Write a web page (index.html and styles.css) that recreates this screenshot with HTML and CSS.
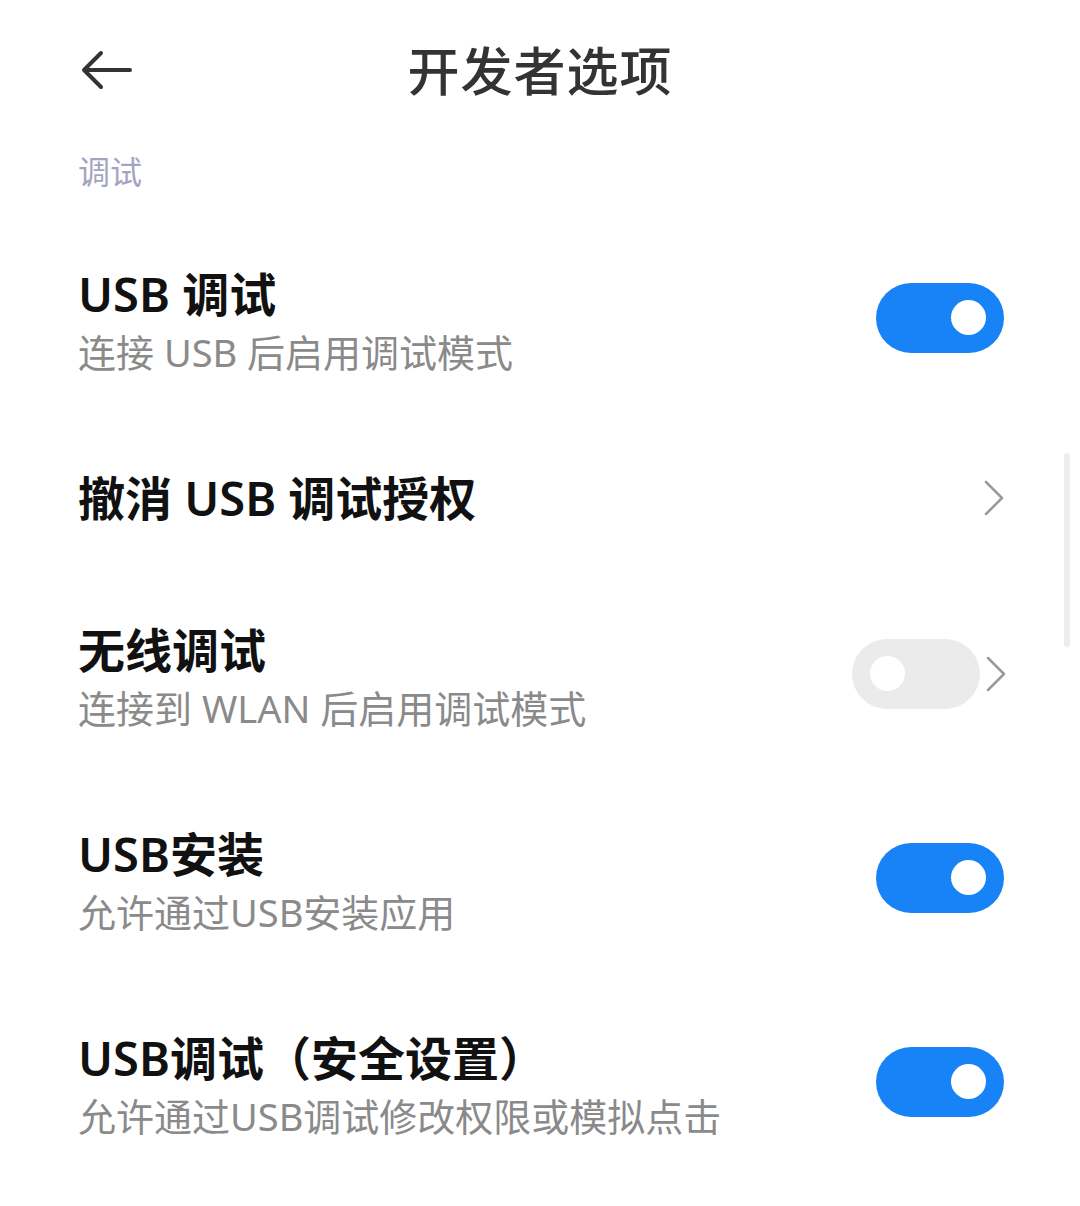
FILE: index.html
```html
<html>
	<head>
		<meta charset="utf-8">
		<title>开发者选项</title>
		<link rel="stylesheet" href="styles.css">
	</head>
	<body>
		<!-- header -->
		<div class="header">
			<div class="back">
				<svg width="52" height="40" viewBox="0 0 52 40">
					<path d="M50 20 H5 M21 3 L4 20 L21 37" fill="none" stroke="#333" stroke-width="4" stroke-linecap="round" stroke-linejoin="round"/>
				</svg>
			</div>
			<div class="title">开发者选项</div>
		</div>

		<div class="section_label">调试</div>

		<div class="list">
			<div class="row">
				<div class="text">
					<div class="item_title">USB 调试</div>
					<div class="item_sub">连接 USB 后启用调试模式</div>
				</div>
				<div class="toggle on"><span class="knob"></span></div>
			</div>

			<div class="row single">
				<div class="text">
					<div class="item_title">撤消 USB 调试授权</div>
				</div>
				<svg class="chevron" width="20" height="36" viewBox="0 0 20 36">
					<path d="M2 2 L18 18 L2 34" fill="none" stroke="#9a9a9a" stroke-width="2.5" stroke-linecap="round" stroke-linejoin="round"/>
				</svg>
			</div>

			<div class="row">
				<div class="text">
					<div class="item_title">无线调试</div>
					<div class="item_sub">连接到 WLAN 后启用调试模式</div>
				</div>
				<div class="controls">
					<div class="toggle off"><span class="knob"></span></div>
					<svg class="chevron" width="20" height="36" viewBox="0 0 20 36">
						<path d="M2 2 L18 18 L2 34" fill="none" stroke="#9a9a9a" stroke-width="2.5" stroke-linecap="round" stroke-linejoin="round"/>
					</svg>
				</div>
			</div>

			<div class="row">
				<div class="text">
					<div class="item_title">USB安装</div>
					<div class="item_sub">允许通过USB安装应用</div>
				</div>
				<div class="toggle on"><span class="knob"></span></div>
			</div>

			<div class="row">
				<div class="text">
					<div class="item_title">USB调试（安全设置）</div>
					<div class="item_sub">允许通过USB调试修改权限或模拟点击</div>
				</div>
				<div class="toggle on"><span class="knob"></span></div>
			</div>
		</div>

		<div class="scrollbar"></div>
	</body>
</html>
```

FILE: styles.css
```css
/* CSS Styling */
body {
	margin: 0;
	background-color: #ffffff;
	font-family: "Noto Sans", "Noto Sans CJK SC", sans-serif;
	position: relative;
	min-height: 1206px;
}

.header {
	height: 140px;
	display: flex;
	align-items: center;
	justify-content: center;
	position: relative;
}

.back {
	position: absolute;
	left: 80px;
	top: 50px;
	width: 52px;
	height: 40px;
}

.title {
	font-size: 52px;
	font-weight: 500;
	color: #333333;
	letter-spacing: 1px;
	margin-top: -4px;
}

.section_label {
	margin-top: 10px;
	padding-left: 78px;
	font-size: 32px;
	line-height: 44px;
	color: #a4a4c2;
}

.list {
	margin-top: 28px;
	padding-left: 78px;
	padding-right: 76px;
}

.row {
	display: flex;
	align-items: center;
	justify-content: space-between;
	padding-top: 44px;
	padding-bottom: 44px;
}

.row.single {
	padding-bottom: 52px;
}

.item_title {
	font-size: 47px;
	line-height: 56px;
	font-weight: 600;
	color: #111111;
}

.item_sub {
	font-size: 38px;
	line-height: 60px;
	color: #8a8a8a;
}

.controls {
	display: flex;
	align-items: center;
	gap: 6px;
	margin-right: -2px;
	margin-top: -12px;
}

.toggle {
	width: 128px;
	height: 70px;
	border-radius: 35px;
	position: relative;
}

.toggle.on {
	background-color: #1783f6;
	margin-top: -12px;
}

.toggle.off {
	background-color: #ebebeb;
}

.knob {
	position: absolute;
	top: 17px;
	width: 35px;
	height: 35px;
	border-radius: 50%;
	background-color: #ffffff;
}

.toggle.on .knob {
	right: 18px;
}

.toggle.off .knob {
	left: 18px;
}

.chevron {
	display: block;
}

.scrollbar {
	position: absolute;
	left: 1064px;
	top: 453px;
	width: 6px;
	height: 194px;
	border-radius: 3px;
	background-color: #ededed;
}
```
